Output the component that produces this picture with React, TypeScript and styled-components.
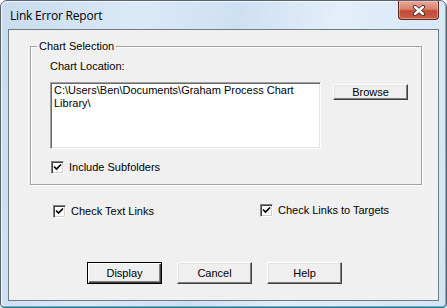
import React from 'react';
import styled, { createGlobalStyle } from 'styled-components';

const GlobalStyle = createGlobalStyle`
  html, body {
    margin: 0;
    padding: 0;
    background: #ffffff;
  }
  * {
    box-sizing: border-box;
  }
`;

const Window = styled.div`
  width: 447px;
  height: 308px;
  display: flex;
  flex-direction: column;
  border: 1px solid #59636d;
  border-radius: 7px 7px 4px 4px;
  background: linear-gradient(100deg, #c8dbee 0%, #dae9f7 28%, #cde0f2 48%, #e3eef9 68%, #d3e5f5 100%);
  box-shadow: inset 1px 1px 0 rgba(255, 255, 255, 0.7), inset -1px -1px 0 #3cc4ee;
  overflow: hidden;
`;

const TitleBar = styled.div`
  height: 28px;
  display: flex;
  align-items: flex-start;
  justify-content: space-between;
  padding: 0 7px 0 9px;
`;

const TitleText = styled.div`
  padding-top: 7px;
  font-family: 'Open Sans', 'Noto Sans', sans-serif;
  font-size: 12px;
  line-height: 16px;
  color: #000000;
  letter-spacing: -0.2px;
`;

const CloseButton = styled.div`
  width: 41px;
  height: 19px;
  display: flex;
  align-items: center;
  justify-content: center;
  border: 1px solid #5e2a22;
  border-top: none;
  border-radius: 0 0 4px 4px;
  background: linear-gradient(180deg, #e9a99a 0%, #d98270 45%, #c24a36 55%, #c8604a 100%);
  box-shadow: inset 0 0 0 1px rgba(255, 210, 200, 0.45);
`;

const Client = styled.div`
  flex: 1;
  margin: 0 7px 6px 7px;
  border: 1px solid #6f7a84;
  background: #f0f0f0;
  display: flex;
  flex-direction: column;
  font-family: 'Liberation Sans', Arial, sans-serif;
  font-size: 11px;
  color: #000000;
`;

const Group = styled.fieldset`
  margin: 10px 0 0 21px;
  width: 392px;
  padding: 0;
  border: 1px solid #a0a0a0;
  box-shadow: inset 1px 1px 0 #ffffff, 1px 1px 0 #ffffff;
`;

const GroupLegend = styled.legend`
  margin-left: 6px;
  padding: 0 2px;
  line-height: 13px;
`;

const GroupBody = styled.div`
  display: flex;
  flex-direction: column;
  padding: 7px 0 10px 19px;
`;

const FieldLabel = styled.div`
  line-height: 13px;
`;

const LocationRow = styled.div`
  display: flex;
  align-items: flex-start;
  margin-top: 9px;
`;

const EditBox = styled.div`
  width: 271px;
  height: 67px;
  padding: 1px 2px 0 2px;
  background: #ffffff;
  border: 1px solid;
  border-color: #a0a0a0 #ffffff #ffffff #a0a0a0;
  box-shadow: inset 1px 1px 0 #696969, inset -1px -1px 0 #e3e3e3;
  line-height: 13px;
  padding-left: 3px;
  word-break: normal;
`;

const PushButton = styled.button<{ $default?: boolean; $h: number }>`
  width: 75px;
  height: ${(p) => p.$h}px;
  padding: 0;
  margin: 0;
  font-family: 'Liberation Sans', Arial, sans-serif;
  font-size: 11px;
  color: #000000;
  background: #efefef;
  border: 1px solid;
  border-color: ${(p) => (p.$default ? '#000000' : '#ffffff #404040 #404040 #ffffff')};
  box-shadow: ${(p) =>
    p.$default
      ? 'inset 1px 1px 0 #ffffff, inset -1px -1px 0 #404040, inset -2px -2px 0 #808080'
      : 'inset -1px -1px 0 #808080, inset 1px 1px 0 #e3e3e3'};
`;

const BrowseButton = styled(PushButton)`
  margin: 2px 0 0 12px;
  line-height: 12px;
`;

const CheckLine = styled.label<{ $indent: number; $top: number }>`
  display: flex;
  align-items: center;
  gap: 5px;
  margin-left: ${(p) => p.$indent}px;
  margin-top: ${(p) => p.$top}px;
  line-height: 13px;
`;

const CheckBox = styled.span`
  width: 13px;
  height: 13px;
  display: flex;
  align-items: center;
  justify-content: center;
  background: #ffffff;
  border: 1px solid;
  border-color: #808080 #ffffff #ffffff #808080;
  box-shadow: inset 1px 1px 0 #404040, inset -1px -1px 0 #d4d0c8;
  flex-shrink: 0;
`;

const OptionsRow = styled.div`
  display: grid;
  grid-template-columns: 207px auto;
  align-items: start;
  margin-top: 20px;
  padding-left: 44px;
`;

const ButtonRow = styled.div`
  display: flex;
  gap: 15px;
  margin-top: 44px;
  padding-left: 78px;
`;

const Check: React.FC<{ label: string; indent?: number; top?: number }> = ({
  label,
  indent = 0,
  top = 0,
}) => (
  <CheckLine $indent={indent} $top={top}>
    <CheckBox>
      <svg width="9" height="9" viewBox="0 0 9 9">
        <path d="M1 3.5 L3.5 6 L8 1.5" fill="none" stroke="#000" strokeWidth="1.7" />
      </svg>
    </CheckBox>
    <span>{label}</span>
  </CheckLine>
);

export default function App() {
  return (
    <>
      <GlobalStyle />
      <Window>
        <TitleBar>
          <TitleText>Link Error Report</TitleText>
          <CloseButton>
            <svg width="14" height="11" viewBox="0 0 14 11">
              <path d="M3 2 L11 9 M11 2 L3 9" stroke="#4a2a26" strokeWidth="4.2" strokeLinecap="round" />
              <path d="M3 2 L11 9 M11 2 L3 9" stroke="#ffffff" strokeWidth="2.4" strokeLinecap="round" />
            </svg>
          </CloseButton>
        </TitleBar>
        <Client>
          <Group>
            <GroupLegend>Chart Selection</GroupLegend>
            <GroupBody>
              <FieldLabel>Chart Location:</FieldLabel>
              <LocationRow>
                <EditBox>C:\Users\Ben\Documents\Graham Process Chart Library\</EditBox>
                <BrowseButton $h={16}>Browse</BrowseButton>
              </LocationRow>
              <Check label="Include Subfolders" indent={1} top={12} />
            </GroupBody>
          </Group>
          <OptionsRow>
            <Check label="Check Text Links" />
            <Check label="Check Links to Targets" top={-1} />
          </OptionsRow>
          <ButtonRow>
            <PushButton $default $h={22}>Display</PushButton>
            <PushButton $h={22}>Cancel</PushButton>
            <PushButton $h={22}>Help</PushButton>
          </ButtonRow>
        </Client>
      </Window>
    </>
  );
}
